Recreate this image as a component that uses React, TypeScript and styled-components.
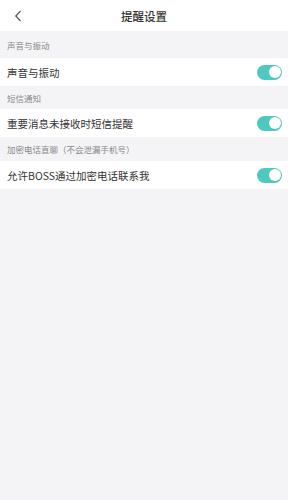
import React, { useState } from 'react';
import styled, { createGlobalStyle } from 'styled-components';

const GlobalStyle = createGlobalStyle`
  html, body {
    margin: 0;
    padding: 0;
    background: #f4f4f6;
    font-family: "Noto Sans CJK SC", "Noto Sans", sans-serif;
  }
`;

const Page = styled.div`
  width: 288px;
  min-height: 500px;
  background: #f4f4f6;
  display: flex;
  flex-direction: column;
`;

const Header = styled.header`
  height: 31px;
  background: #fff;
  display: grid;
  grid-template-columns: 40px 1fr 40px;
  align-items: center;
`;

const BackButton = styled.button`
  border: 0;
  background: none;
  padding: 0 0 0 14px;
  height: 31px;
  display: flex;
  align-items: center;
  cursor: pointer;
`;

const Title = styled.h1`
  margin: 0;
  text-align: center;
  font-size: 11.5px;
  font-weight: 500;
  color: #333;
`;

const SectionTitle = styled.div<{ $h: number }>`
  height: ${p => p.$h}px;
  padding-left: 7px;
  display: flex;
  align-items: center;
  font-size: 8.5px;
  color: #888;
`;

const Row = styled.div`
  height: 28px;
  background: #fff;
  display: flex;
  align-items: center;
  justify-content: space-between;
  padding: 0 6px 0 7px;
`;

const Label = styled.span`
  font-size: 10.5px;
  color: #333;
`;

const Track = styled.button<{ $on: boolean }>`
  width: 25px;
  height: 15px;
  border: 0;
  padding: 0;
  border-radius: 8px;
  background: ${p => (p.$on ? '#4fc8bf' : '#ddd')};
  display: flex;
  align-items: center;
  justify-content: ${p => (p.$on ? 'flex-end' : 'flex-start')};
  cursor: pointer;
`;

const Knob = styled.span`
  width: 12px;
  height: 12px;
  margin: 0 1.5px;
  border-radius: 50%;
  background: #fff;
`;

function Toggle() {
  const [on, setOn] = useState(true);
  return (
    <Track $on={on} onClick={() => setOn(!on)}>
      <Knob />
    </Track>
  );
}

const sections = [
  { title: '声音与振动', label: '声音与振动', h: 27 },
  { title: '短信通知', label: '重要消息未接收时短信提醒', h: 23 },
  { title: '加密电话直聊（不会泄漏手机号）', label: '允许BOSS通过加密电话联系我', h: 24 },
];

export default function App() {
  return (
    <Page>
      <GlobalStyle />
      <Header>
        <BackButton>
          <svg width="8" height="12" viewBox="0 0 8 12">
            <path d="M6.5 1 L1.8 6 L6.5 11" fill="none" stroke="#555" strokeWidth="1.2" />
          </svg>
        </BackButton>
        <Title>提醒设置</Title>
        <span />
      </Header>
      {sections.map(s => (
        <React.Fragment key={s.title}>
          <SectionTitle $h={s.h}>{s.title}</SectionTitle>
          <Row>
            <Label>{s.label}</Label>
            <Toggle />
          </Row>
        </React.Fragment>
      ))}
    </Page>
  );
}
